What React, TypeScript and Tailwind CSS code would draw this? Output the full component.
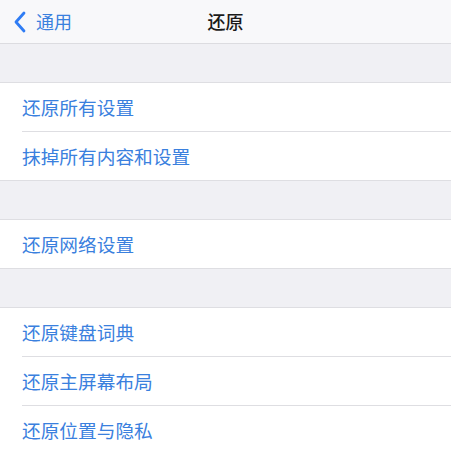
import React from "react";

const font = { fontFamily: '"Noto Sans CJK SC", "Noto Sans", sans-serif' };

function Row({ label, last }: { label: string; last?: boolean }) {
  return (
    <div className="pl-[22px] bg-white">
      <div
        className={
          "flex items-center text-[18.7px] text-[#3a80de] " +
          (last ? "h-[48px]" : "h-[49px] border-b border-[#dedee2]")
        }
      >
        {label}
      </div>
    </div>
  );
}

function Group({ items }: { items: string[] }) {
  return (
    <div className="bg-white border-t border-b border-[#dedee2]">
      {items.map((t, i) => (
        <Row key={t} label={t} last={i === items.length - 1} />
      ))}
    </div>
  );
}

export default function App() {
  return (
    <div className="w-[451px] h-[451px] overflow-hidden bg-[#f0f0f4]" style={font}>
      <div className="h-[44px] bg-[#f8f8fa] border-b border-[#dcdce0] relative flex items-center">
        <div className="flex items-center pl-[13px]">
          <svg width="14" height="22" viewBox="0 0 14 22" className="mr-[9px]">
            <path
              d="M11 2 L3 11 L11 20"
              fill="none"
              stroke="#2f7cf4"
              strokeWidth="2.8"
              strokeLinecap="round"
              strokeLinejoin="round"
            />
          </svg>
          <span className="text-[18px] text-[#3a80de]">通用</span>
        </div>
        <div className="absolute inset-0 flex items-center justify-center pointer-events-none">
          <span className="text-[18px] text-[#1a1a1a] font-medium">还原</span>
        </div>
      </div>
      <div className="h-[38px]" />
      <Group items={["还原所有设置", "抹掉所有内容和设置"]} />
      <div className="h-[38px]" />
      <Group items={["还原网络设置"]} />
      <div className="h-[38px]" />
      <Group items={["还原键盘词典", "还原主屏幕布局", "还原位置与隐私"]} />
    </div>
  );
}
